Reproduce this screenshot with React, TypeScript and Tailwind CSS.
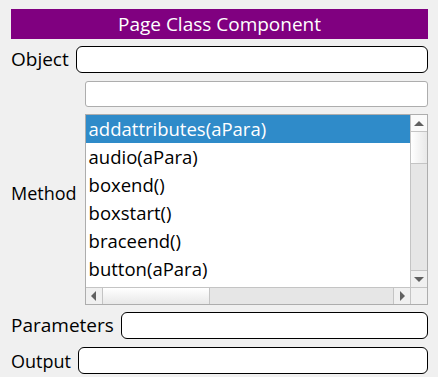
import React from 'react';

const methods = [
  'addattributes(aPara)',
  'audio(aPara)',
  'boxend()',
  'boxstart()',
  'braceend()',
  'button(aPara)',
];

const Arrow: React.FC<{ dir: 'up' | 'down' | 'left' | 'right' }> = ({ dir }) => {
  const points = {
    up: '0,5 5,0 10,5',
    down: '0,0 10,0 5,5',
    left: '5,0 5,10 0,5',
    right: '0,0 5,5 0,10',
  }[dir];
  const vertical = dir === 'up' || dir === 'down';
  return (
    <svg width={vertical ? 10 : 5} height={vertical ? 5 : 10} viewBox={vertical ? '0 0 10 5' : '0 0 5 10'}>
      <polygon points={points} fill="#606060" />
    </svg>
  );
};

const Field: React.FC<{ label: string; size?: string }> = ({ label, size = 'text-[19px]' }) => (
  <div className="flex items-center gap-[7px]">
    <span className={`${size} leading-none text-black`}>{label}</span>
    <div className="h-[27px] flex-1 rounded-[6px] border border-black bg-white" />
  </div>
);

const App: React.FC = () => {
  return (
    <div
      className="h-[377px] w-[438px] bg-[#f0f0f0] pl-[11px] pr-[10px] pt-[9px]"
      style={{ fontFamily: '"Open Sans", "Noto Sans", sans-serif' }}
    >
      {/* Title */}
      <div className="flex h-[30px] items-center justify-center bg-[#800080] text-[19px] text-white">
        Page Class Component
      </div>

      <div className="mt-[7px]">
        <Field label="Object" />
      </div>

      {/* Method */}
      <div className="mt-[8px] flex items-center gap-[8px]">
        <span className="text-[18px] leading-none text-black">Method</span>
        <div className="flex flex-1 flex-col gap-[7px]">
          <div className="h-[26px] rounded-[3px] border border-[#adadad] bg-white" />
          <div className="flex h-[191px] flex-col border border-[#adadad] bg-white">
            <div className="flex min-h-0 flex-1">
              <div className="flex-1 overflow-hidden">
                {methods.map((m, i) => (
                  <div
                    key={m}
                    className={`flex h-[28px] items-center whitespace-nowrap pl-[3px] text-[18.5px] ${
                      i === 0 ? 'bg-[#2f8bc9] text-white' : 'text-black'
                    }`}
                  >
                    {m}
                  </div>
                ))}
              </div>
              {/* vertical scrollbar */}
              <div className="flex w-[17px] flex-col border-l border-[#c4c4c4] bg-[#e6e6e6]">
                <div className="flex h-[17px] items-center justify-center border-b border-[#c4c4c4] bg-[#fafafa]">
                  <Arrow dir="up" />
                </div>
                <div className="h-[32px] border-b border-[#c4c4c4] bg-gradient-to-r from-white to-[#e8e8e8]" />
                <div className="flex-1" />
                <div className="flex h-[17px] items-center justify-center border-t border-[#c4c4c4] bg-[#f0f0f0]">
                  <Arrow dir="down" />
                </div>
              </div>
            </div>
            {/* horizontal scrollbar */}
            <div className="flex h-[17px] border-t border-[#c4c4c4] bg-[#e6e6e6]">
              <div className="flex w-[17px] items-center justify-center border-r border-[#c4c4c4] bg-[#f0f0f0]">
                <Arrow dir="left" />
              </div>
              <div className="w-[107px] border-r border-[#c4c4c4] bg-gradient-to-b from-white to-[#e8e8e8]" />
              <div className="flex-1" />
              <div className="flex w-[17px] items-center justify-center border-l border-[#c4c4c4] bg-[#f0f0f0]">
                <Arrow dir="right" />
              </div>
              <div className="w-[17px] border-l border-[#c4c4c4] bg-[#f0f0f0]" />
            </div>
          </div>
        </div>
      </div>

      <div className="mt-[7px]">
        <Field label="Parameters" />
      </div>
      <div className="mt-[8px]">
        <Field label="Output" size="text-[18px]" />
      </div>
    </div>
  );
};

export default App;
